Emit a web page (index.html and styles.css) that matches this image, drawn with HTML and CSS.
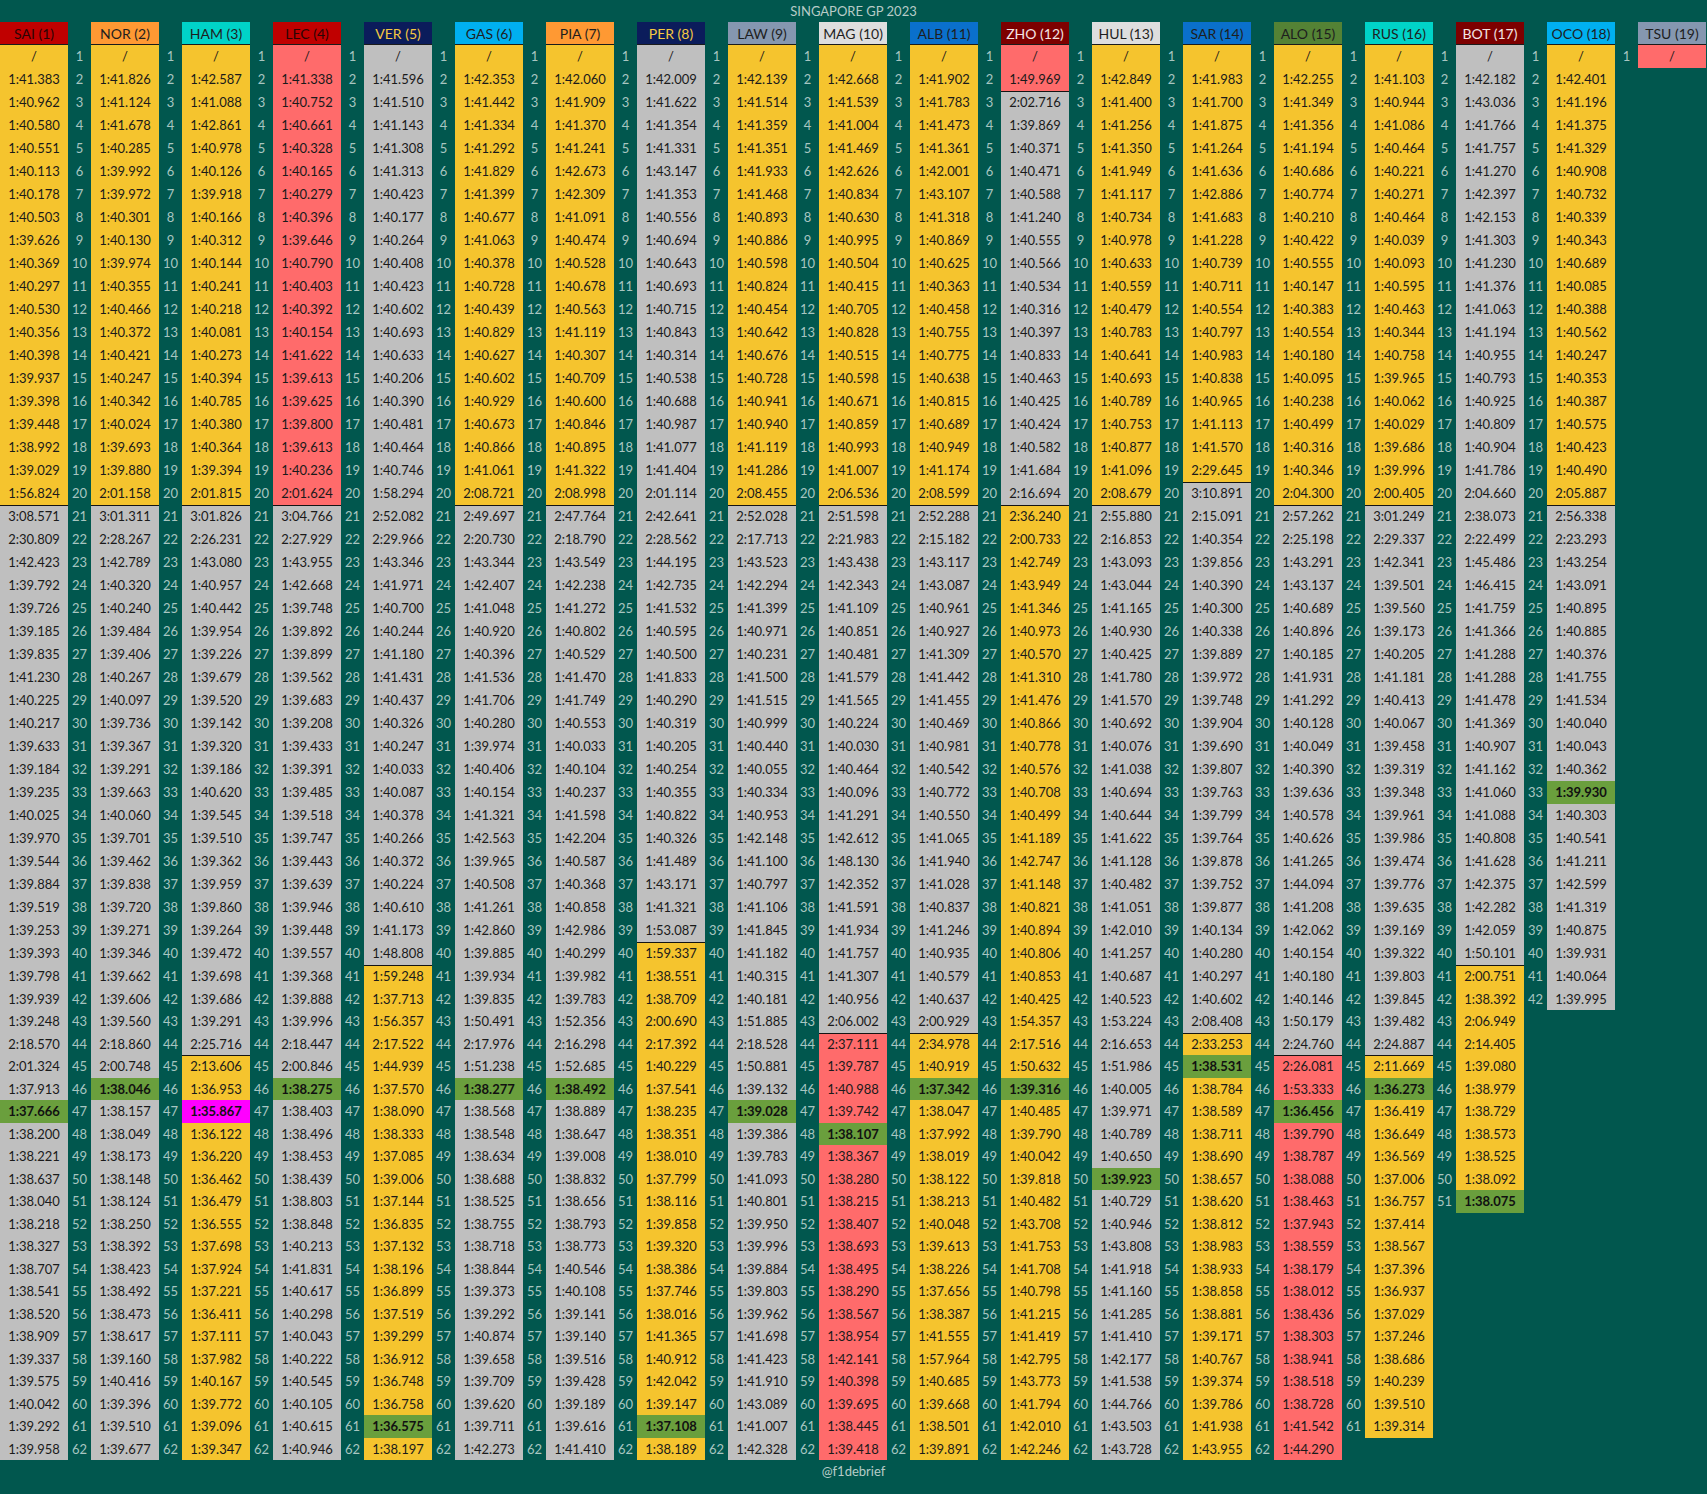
FILE: index.html
```html
<!DOCTYPE html>
<html lang="en">
<head>
<meta charset="utf-8">
<title>Singapore GP 2023 – lap times</title>
<link rel="stylesheet" href="styles.css">
</head>
<body>
<div class="page">
  <div class="title">SINGAPORE GP 2023</div>
  <div class="board" id="board"></div>
  <div class="credit">@f1debrief</div>
</div>
<script src="script.js"></script>
</body>
</html>
```

FILE: styles.css
```css
* { box-sizing: border-box; }
html, body { margin: 0; padding: 0; }
body {
  background: #01574e;
  font-family: Lato, "Open Sans", "Liberation Sans", sans-serif;
  width: 1707px;
  min-height: 1494px;
}
.page { width: 1707px; }
.title {
  height: 22px;
  line-height: 22px;
  text-align: center;
  font-size: 13px;
  color: #b7cbc7;
}
.board { display: flex; align-items: flex-start; }
.lane { width: 68px; flex: none; }
.laps { width: 23px; flex: none; }
.hd {
  height: 23px;
  line-height: 23px;
  text-align: center;
  font-size: 14px;
  color: #1e1e1e;
  box-shadow: inset 0 -1px 0 #1b1b1b;
  white-space: nowrap;
}
.gap { height: 23px; }
.c {
  height: 23px;
  line-height: 23px;
  text-align: center;
  font-size: 13px;
  color: #1a1a1a;
  white-space: nowrap;
}
.n {
  height: 23px;
  line-height: 23px;
  text-align: center;
  font-size: 13px;
  color: #a8c6c1;
}
.late { height: 22.5px; line-height: 22.5px; }
.med { background: #f5c42e; }
.hard { background: #bfbfbf; }
.soft { background: #ff6b6b; }
.cut { box-shadow: inset 0 1px 0 #141414; }
.pb { background: #6a9f3d; font-weight: 700; color: #111; }
.fl { background: #ff00ff; font-weight: 700; color: #111; }

.t-fer { background: #c00000; color: #2a0505; }
.t-mcl { background: #ff9933; }
.t-mer { background: #00d3c8; }
.t-rbr { background: #0b1c5b; color: #f5c842; }
.t-alp { background: #00b0f0; }
.t-at { background: #8597b0; }
.t-haas { background: #dedede; }
.t-wil { background: #0a70cc; }
.t-alf { background: #7d0000; color: #f3e4e4; }
.t-am { background: #548235; }

.credit {
  height: 34px;
  line-height: 22px;
  text-align: center;
  font-size: 13px;
  color: #b7cbc7;
}
```

FILE: script.js
```js
const drivers = [
  ['SAI (1)', 'fer', 'M1 H21', 'p47', `
/ 1:41.383 1:40.962 1:40.580 1:40.551 1:40.113 1:40.178 1:40.503 1:39.626 1:40.369
1:40.297 1:40.530 1:40.356 1:40.398 1:39.937 1:39.398 1:39.448 1:38.992 1:39.029 1:56.824
3:08.571 2:30.809 1:42.423 1:39.792 1:39.726 1:39.185 1:39.835 1:41.230 1:40.225 1:40.217
1:39.633 1:39.184 1:39.235 1:40.025 1:39.970 1:39.544 1:39.884 1:39.519 1:39.253 1:39.393
1:39.798 1:39.939 1:39.248 2:18.570 2:01.324 1:37.913 1:37.666 1:38.200 1:38.221 1:38.637
1:38.040 1:38.218 1:38.327 1:38.707 1:38.541 1:38.520 1:38.909 1:39.337 1:39.575 1:40.042
1:39.292 1:39.958`],
  ['NOR (2)', 'mcl', 'M1 H21', 'p46', `
/ 1:41.826 1:41.124 1:41.678 1:40.285 1:39.992 1:39.972 1:40.301 1:40.130 1:39.974
1:40.355 1:40.466 1:40.372 1:40.421 1:40.247 1:40.342 1:40.024 1:39.693 1:39.880 2:01.158
3:01.311 2:28.267 1:42.789 1:40.320 1:40.240 1:39.484 1:39.406 1:40.267 1:40.097 1:39.736
1:39.367 1:39.291 1:39.663 1:40.060 1:39.701 1:39.462 1:39.838 1:39.720 1:39.271 1:39.346
1:39.662 1:39.606 1:39.560 2:18.860 2:00.748 1:38.046 1:38.157 1:38.049 1:38.173 1:38.148
1:38.124 1:38.250 1:38.392 1:38.423 1:38.492 1:38.473 1:38.617 1:39.160 1:40.416 1:39.396
1:39.510 1:39.677`],
  ['HAM (3)', 'mer', 'M1 H21 M45', 'f47', `
/ 1:42.587 1:41.088 1:42.861 1:40.978 1:40.126 1:39.918 1:40.166 1:40.312 1:40.144
1:40.241 1:40.218 1:40.081 1:40.273 1:40.394 1:40.785 1:40.380 1:40.364 1:39.394 2:01.815
3:01.826 2:26.231 1:43.080 1:40.957 1:40.442 1:39.954 1:39.226 1:39.679 1:39.520 1:39.142
1:39.320 1:39.186 1:40.620 1:39.545 1:39.510 1:39.362 1:39.959 1:39.860 1:39.264 1:39.472
1:39.698 1:39.686 1:39.291 2:25.716 2:13.606 1:36.953 1:35.867 1:36.122 1:36.220 1:36.462
1:36.479 1:36.555 1:37.698 1:37.924 1:37.221 1:36.411 1:37.111 1:37.982 1:40.167 1:39.772
1:39.096 1:39.347`],
  ['LEC (4)', 'fer', 'S1 H21', 'p46', `
/ 1:41.338 1:40.752 1:40.661 1:40.328 1:40.165 1:40.279 1:40.396 1:39.646 1:40.790
1:40.403 1:40.392 1:40.154 1:41.622 1:39.613 1:39.625 1:39.800 1:39.613 1:40.236 2:01.624
3:04.766 2:27.929 1:43.955 1:42.668 1:39.748 1:39.892 1:39.899 1:39.562 1:39.683 1:39.208
1:39.433 1:39.391 1:39.485 1:39.518 1:39.747 1:39.443 1:39.639 1:39.946 1:39.448 1:39.557
1:39.368 1:39.888 1:39.996 2:18.447 2:00.846 1:38.275 1:38.403 1:38.496 1:38.453 1:38.439
1:38.803 1:38.848 1:40.213 1:41.831 1:40.617 1:40.298 1:40.043 1:40.222 1:40.545 1:40.105
1:40.615 1:40.946`],
  ['VER (5)', 'rbr', 'H1 M41', 'p61', `
/ 1:41.596 1:41.510 1:41.143 1:41.308 1:41.313 1:40.423 1:40.177 1:40.264 1:40.408
1:40.423 1:40.602 1:40.693 1:40.633 1:40.206 1:40.390 1:40.481 1:40.464 1:40.746 1:58.294
2:52.082 2:29.966 1:43.346 1:41.971 1:40.700 1:40.244 1:41.180 1:41.431 1:40.437 1:40.326
1:40.247 1:40.033 1:40.087 1:40.378 1:40.266 1:40.372 1:40.224 1:40.610 1:41.173 1:48.808
1:59.248 1:37.713 1:56.357 2:17.522 1:44.939 1:37.570 1:38.090 1:38.333 1:37.085 1:39.006
1:37.144 1:36.835 1:37.132 1:38.196 1:36.899 1:37.519 1:39.299 1:36.912 1:36.748 1:36.758
1:36.575 1:38.197`],
  ['GAS (6)', 'alp', 'M1 H21', 'p46', `
/ 1:42.353 1:41.442 1:41.334 1:41.292 1:41.829 1:41.399 1:40.677 1:41.063 1:40.378
1:40.728 1:40.439 1:40.829 1:40.627 1:40.602 1:40.929 1:40.673 1:40.866 1:41.061 2:08.721
2:49.697 2:20.730 1:43.344 1:42.407 1:41.048 1:40.920 1:40.396 1:41.536 1:41.706 1:40.280
1:39.974 1:40.406 1:40.154 1:41.321 1:42.563 1:39.965 1:40.508 1:41.261 1:42.860 1:39.885
1:39.934 1:39.835 1:50.491 2:17.976 1:51.238 1:38.277 1:38.568 1:38.548 1:38.634 1:38.688
1:38.525 1:38.755 1:38.718 1:38.844 1:39.373 1:39.292 1:40.874 1:39.658 1:39.709 1:39.620
1:39.711 1:42.273`],
  ['PIA (7)', 'mcl', 'M1 H21', 'p46', `
/ 1:42.060 1:41.909 1:41.370 1:41.241 1:42.673 1:42.309 1:41.091 1:40.474 1:40.528
1:40.678 1:40.563 1:41.119 1:40.307 1:40.709 1:40.600 1:40.846 1:40.895 1:41.322 2:08.998
2:47.764 2:18.790 1:43.549 1:42.238 1:41.272 1:40.802 1:40.529 1:41.470 1:41.749 1:40.553
1:40.033 1:40.104 1:40.237 1:41.598 1:42.204 1:40.587 1:40.368 1:40.858 1:42.986 1:40.299
1:39.982 1:39.783 1:52.356 2:16.298 1:52.685 1:38.492 1:38.889 1:38.647 1:39.008 1:38.832
1:38.656 1:38.793 1:38.773 1:40.546 1:40.108 1:39.141 1:39.140 1:39.516 1:39.428 1:39.189
1:39.616 1:41.410`],
  ['PER (8)', 'rbr', 'H1 M40', 'p61', `
/ 1:42.009 1:41.622 1:41.354 1:41.331 1:43.147 1:41.353 1:40.556 1:40.694 1:40.643
1:40.693 1:40.715 1:40.843 1:40.314 1:40.538 1:40.688 1:40.987 1:41.077 1:41.404 2:01.114
2:42.641 2:28.562 1:44.195 1:42.735 1:41.532 1:40.595 1:40.500 1:41.833 1:40.290 1:40.319
1:40.205 1:40.254 1:40.355 1:40.822 1:40.326 1:41.489 1:43.171 1:41.321 1:53.087 1:59.337
1:38.551 1:38.709 2:00.690 2:17.392 1:40.229 1:37.541 1:38.235 1:38.351 1:38.010 1:37.799
1:38.116 1:39.858 1:39.320 1:38.386 1:37.746 1:38.016 1:41.365 1:40.912 1:42.042 1:39.147
1:37.108 1:38.189`],
  ['LAW (9)', 'at', 'M1 H21', 'p47', `
/ 1:42.139 1:41.514 1:41.359 1:41.351 1:41.933 1:41.468 1:40.893 1:40.886 1:40.598
1:40.824 1:40.454 1:40.642 1:40.676 1:40.728 1:40.941 1:40.940 1:41.119 1:41.286 2:08.455
2:52.028 2:17.713 1:43.523 1:42.294 1:41.399 1:40.971 1:40.231 1:41.500 1:41.515 1:40.999
1:40.440 1:40.055 1:40.334 1:40.953 1:42.148 1:41.100 1:40.797 1:41.106 1:41.845 1:41.182
1:40.315 1:40.181 1:51.885 2:18.528 1:50.881 1:39.132 1:39.028 1:39.386 1:39.783 1:41.093
1:40.801 1:39.950 1:39.996 1:39.884 1:39.803 1:39.962 1:41.698 1:41.423 1:41.910 1:43.089
1:41.007 1:42.328`],
  ['MAG (10)', 'haas', 'M1 H21 S44', 'p48', `
/ 1:42.668 1:41.539 1:41.004 1:41.469 1:42.626 1:40.834 1:40.630 1:40.995 1:40.504
1:40.415 1:40.705 1:40.828 1:40.515 1:40.598 1:40.671 1:40.859 1:40.993 1:41.007 2:06.536
2:51.598 2:21.983 1:43.438 1:42.343 1:41.109 1:40.851 1:40.481 1:41.579 1:41.565 1:40.224
1:40.030 1:40.464 1:40.096 1:41.291 1:42.612 1:48.130 1:42.352 1:41.591 1:41.934 1:41.757
1:41.307 1:40.956 2:06.002 2:37.111 1:39.787 1:40.988 1:39.742 1:38.107 1:38.367 1:38.280
1:38.215 1:38.407 1:38.693 1:38.495 1:38.290 1:38.567 1:38.954 1:42.141 1:40.398 1:39.695
1:38.445 1:39.418`],
  ['ALB (11)', 'wil', 'M1 H21 M44', 'p46', `
/ 1:41.902 1:41.783 1:41.473 1:41.361 1:42.001 1:43.107 1:41.318 1:40.869 1:40.625
1:40.363 1:40.458 1:40.755 1:40.775 1:40.638 1:40.815 1:40.689 1:40.949 1:41.174 2:08.599
2:52.288 2:15.182 1:43.117 1:43.087 1:40.961 1:40.927 1:41.309 1:41.442 1:41.455 1:40.469
1:40.981 1:40.542 1:40.772 1:40.550 1:41.065 1:41.940 1:41.028 1:40.837 1:41.246 1:40.935
1:40.579 1:40.637 2:00.929 2:34.978 1:40.919 1:37.342 1:38.047 1:37.992 1:38.019 1:38.122
1:38.213 1:40.048 1:39.613 1:38.226 1:37.656 1:38.387 1:41.555 1:57.964 1:40.685 1:39.668
1:38.501 1:39.891`],
  ['ZHO (12)', 'alf', 'S1 H3 M21', 'p46', `
/ 1:49.969 2:02.716 1:39.869 1:40.371 1:40.471 1:40.588 1:41.240 1:40.555 1:40.566
1:40.534 1:40.316 1:40.397 1:40.833 1:40.463 1:40.425 1:40.424 1:40.582 1:41.684 2:16.694
2:36.240 2:00.733 1:42.749 1:43.949 1:41.346 1:40.973 1:40.570 1:41.310 1:41.476 1:40.866
1:40.778 1:40.576 1:40.708 1:40.499 1:41.189 1:42.747 1:41.148 1:40.821 1:40.894 1:40.806
1:40.853 1:40.425 1:54.357 2:17.516 1:50.632 1:39.316 1:40.485 1:39.790 1:40.042 1:39.818
1:40.482 1:43.708 1:41.753 1:41.708 1:40.798 1:41.215 1:41.419 1:42.795 1:43.773 1:41.794
1:42.010 1:42.246`],
  ['HUL (13)', 'haas', 'M1 H21', 'p50', `
/ 1:42.849 1:41.400 1:41.256 1:41.350 1:41.949 1:41.117 1:40.734 1:40.978 1:40.633
1:40.559 1:40.479 1:40.783 1:40.641 1:40.693 1:40.789 1:40.753 1:40.877 1:41.096 2:08.679
2:55.880 2:16.853 1:43.093 1:43.044 1:41.165 1:40.930 1:40.425 1:41.780 1:41.570 1:40.692
1:40.076 1:41.038 1:40.694 1:40.644 1:41.622 1:41.128 1:40.482 1:41.051 1:42.010 1:41.257
1:40.687 1:40.523 1:53.224 2:16.653 1:51.986 1:40.005 1:39.971 1:40.789 1:40.650 1:39.923
1:40.729 1:40.946 1:43.808 1:41.918 1:41.160 1:41.285 1:41.410 1:42.177 1:41.538 1:44.766
1:43.503 1:43.728`],
  ['SAR (14)', 'wil', 'M1 H20 M44', 'p45', `
/ 1:41.983 1:41.700 1:41.875 1:41.264 1:41.636 1:42.886 1:41.683 1:41.228 1:40.739
1:40.711 1:40.554 1:40.797 1:40.983 1:40.838 1:40.965 1:41.113 1:41.570 2:29.645 3:10.891
2:15.091 1:40.354 1:39.856 1:40.390 1:40.300 1:40.338 1:39.889 1:39.972 1:39.748 1:39.904
1:39.690 1:39.807 1:39.763 1:39.799 1:39.764 1:39.878 1:39.752 1:39.877 1:40.134 1:40.280
1:40.297 1:40.602 2:08.408 2:33.253 1:38.531 1:38.784 1:38.589 1:38.711 1:38.690 1:38.657
1:38.620 1:38.812 1:38.983 1:38.933 1:38.858 1:38.881 1:39.171 1:40.767 1:39.374 1:39.786
1:41.938 1:43.955`],
  ['ALO (15)', 'am', 'M1 H21 S45', 'p47', `
/ 1:42.255 1:41.349 1:41.356 1:41.194 1:40.686 1:40.774 1:40.210 1:40.422 1:40.555
1:40.147 1:40.383 1:40.554 1:40.180 1:40.095 1:40.238 1:40.499 1:40.316 1:40.346 2:04.300
2:57.262 2:25.198 1:43.291 1:43.137 1:40.689 1:40.896 1:40.185 1:41.931 1:41.292 1:40.128
1:40.049 1:40.390 1:39.636 1:40.578 1:40.626 1:41.265 1:44.094 1:41.208 1:42.062 1:40.154
1:40.180 1:40.146 1:50.179 2:24.760 2:26.081 1:53.333 1:36.456 1:39.790 1:38.787 1:38.088
1:38.463 1:37.943 1:38.559 1:38.179 1:38.012 1:38.436 1:38.303 1:38.941 1:38.518 1:38.728
1:41.542 1:44.290`],
  ['RUS (16)', 'mer', 'M1 H21 M45', 'p46', `
/ 1:41.103 1:40.944 1:41.086 1:40.464 1:40.221 1:40.271 1:40.464 1:40.039 1:40.093
1:40.595 1:40.463 1:40.344 1:40.758 1:39.965 1:40.062 1:40.029 1:39.686 1:39.996 2:00.405
3:01.249 2:29.337 1:42.341 1:39.501 1:39.560 1:39.173 1:40.205 1:41.181 1:40.413 1:40.067
1:39.458 1:39.319 1:39.348 1:39.961 1:39.986 1:39.474 1:39.776 1:39.635 1:39.169 1:39.322
1:39.803 1:39.845 1:39.482 2:24.887 2:11.669 1:36.273 1:36.419 1:36.649 1:36.569 1:37.006
1:36.757 1:37.414 1:38.567 1:37.396 1:36.937 1:37.029 1:37.246 1:38.686 1:40.239 1:39.510
1:39.314`],
  ['BOT (17)', 'alf', 'H1 M41', 'p51', `
/ 1:42.182 1:43.036 1:41.766 1:41.757 1:41.270 1:42.397 1:42.153 1:41.303 1:41.230
1:41.376 1:41.063 1:41.194 1:40.955 1:40.793 1:40.925 1:40.809 1:40.904 1:41.786 2:04.660
2:38.073 2:22.499 1:45.486 1:46.415 1:41.759 1:41.366 1:41.288 1:41.288 1:41.478 1:41.369
1:40.907 1:41.162 1:41.060 1:41.088 1:40.808 1:41.628 1:42.375 1:42.282 1:42.059 1:50.101
2:00.751 1:38.392 2:06.949 2:14.405 1:39.080 1:38.979 1:38.729 1:38.573 1:38.525 1:38.092
1:38.075`],
  ['OCO (18)', 'alp', 'M1 H21', 'p33', `
/ 1:42.401 1:41.196 1:41.375 1:41.329 1:40.908 1:40.732 1:40.339 1:40.343 1:40.689
1:40.085 1:40.388 1:40.562 1:40.247 1:40.353 1:40.387 1:40.575 1:40.423 1:40.490 2:05.887
2:56.338 2:23.293 1:43.254 1:43.091 1:40.895 1:40.885 1:40.376 1:41.755 1:41.534 1:40.040
1:40.043 1:40.362 1:39.930 1:40.303 1:40.541 1:41.211 1:42.599 1:41.319 1:40.875 1:39.931
1:40.064 1:39.995`],
  ['TSU (19)', 'at', 'S1', '', `/`]
];

const compound = { M: 'med', H: 'hard', S: 'soft' };
const board = document.getElementById('board');

function el(cls, text) {
  const d = document.createElement('div');
  d.className = cls;
  if (text !== undefined) d.textContent = text;
  return d;
}

drivers.forEach(([name, team, stintSpec, markSpec, data], i) => {
  const laps = data.trim().split(/\s+/);
  const stints = stintSpec.split(' ').map(s => ({ c: s[0], from: +s.slice(1) }));
  const marks = {};
  markSpec.split(' ').filter(Boolean).forEach(m => { marks[+m.slice(1)] = m[0]; });

  if (i > 0) {
    const col = el('laps');
    col.appendChild(el('gap'));
    laps.forEach((_, k) => col.appendChild(el('n' + (k >= 40 ? ' late' : ''), String(k + 1))));
    board.appendChild(col);
  }

  const lane = el('lane');
  lane.appendChild(el('hd t-' + team, name));
  laps.forEach((t, k) => {
    const lap = k + 1;
    let cur = stints[0];
    stints.forEach(s => { if (s.from <= lap) cur = s; });
    const cls = ['c', compound[cur.c]];
    if (lap > 1 && stints.some(s => s.from === lap)) cls.push('cut');
    if (marks[lap] === 'p') cls.push('pb');
    if (marks[lap] === 'f') cls.push('fl');
    if (lap > 40) cls.push('late');
    lane.appendChild(el(cls.join(' '), t));
  });
  board.appendChild(lane);
});
```
